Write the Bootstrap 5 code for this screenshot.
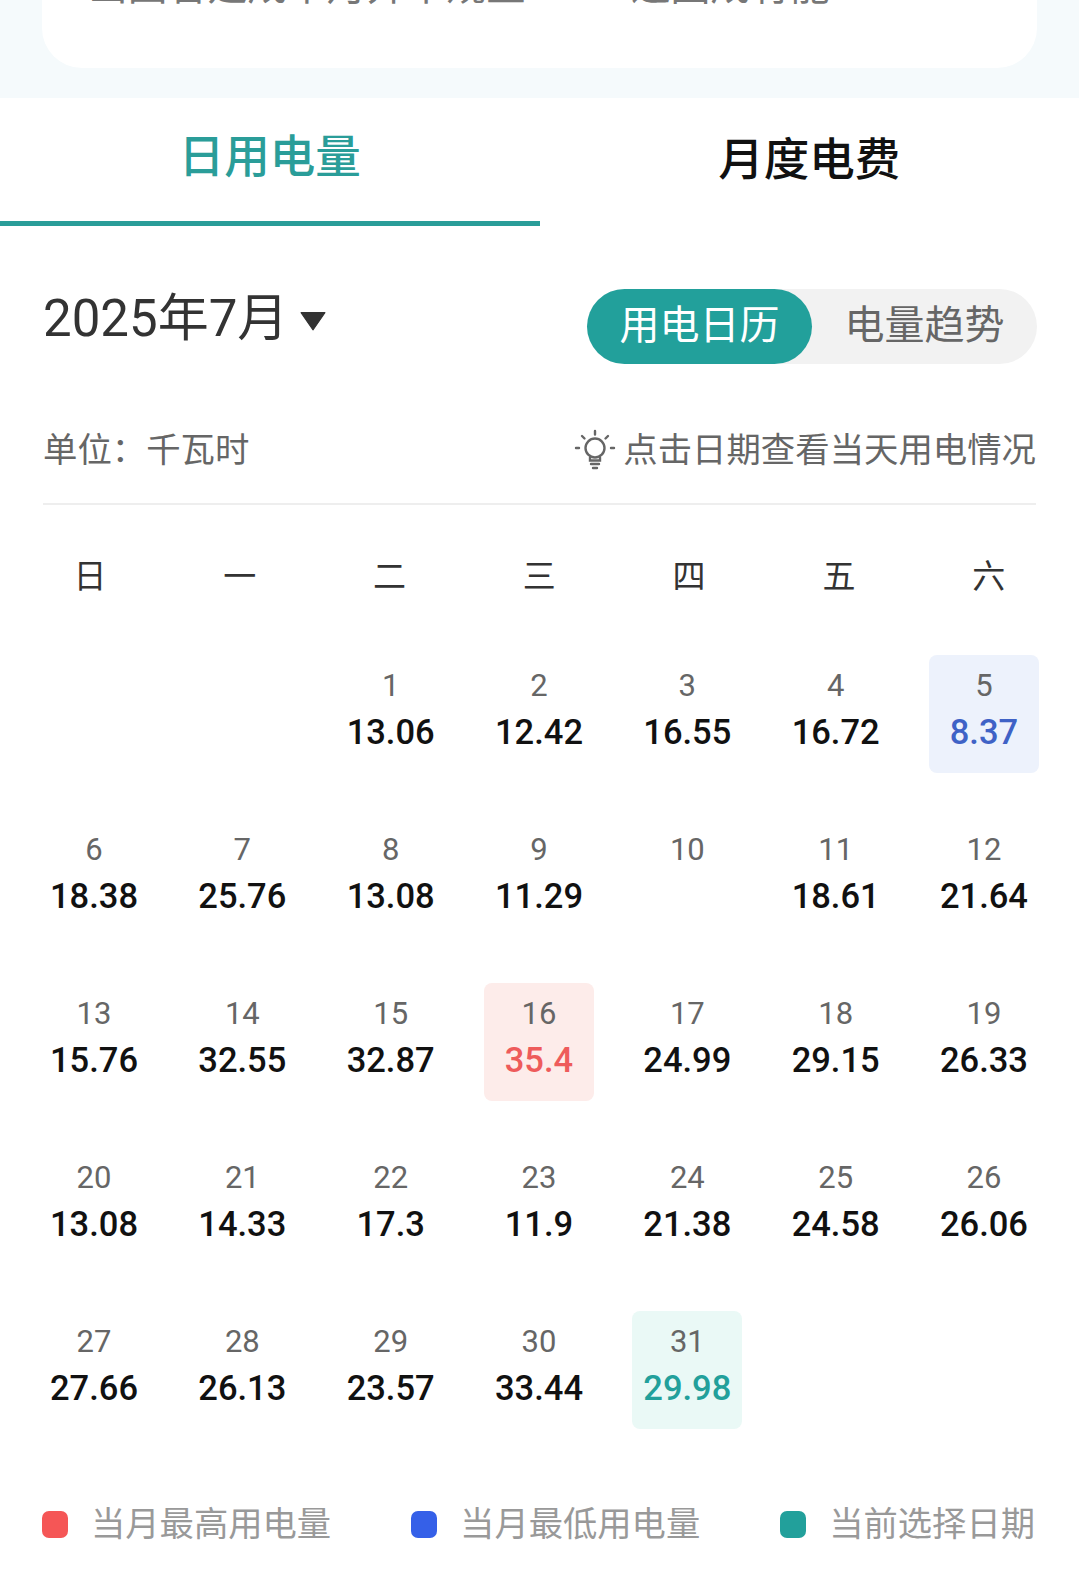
<!doctype html>
<html lang="zh"><head><meta charset="utf-8">
<link href="https://cdn.jsdelivr.net/npm/bootstrap@5.3.0/dist/css/bootstrap.min.css" rel="stylesheet">
<style>
html,body{height:1580px;overflow:hidden;background:#fff}
body{font-family:Roboto,"Noto Sans CJK SC",sans-serif;color:#333}
.topband{height:98px;background:#f5fafc;padding:0 42px}
.topcard{height:68px;background:#fff;border-radius:0 0 40px 40px;overflow:hidden;font-size:39.8px;line-height:40px;color:#777}
.topcard>div{margin-top:-33px;padding-left:46px;gap:105px}
.tabbar{height:128px}
.tabitem{width:50%;font-size:45.5px;font-weight:500;line-height:126px;text-align:center;color:#111;height:128px}
.tabon{color:#2a9d99;border-bottom:5px solid #2a9d99;line-height:120px}
.ctlrow{padding:63px 42px 0 43px;height:138px}
.monthlabel{font-size:51px;line-height:58px;color:#333;margin-top:1px}
.caret{width:26px;height:20px;margin-left:12px;margin-top:4px}
.seg{width:450px;height:75px;background:#f2f2f2;border-radius:38px;font-size:40px;color:#666}
.segon{width:225px;height:75px;border-radius:38px;background:#22a09b;color:#fff;line-height:73px;text-align:center}
.segoff{width:225px;line-height:73px;text-align:center}
.unitwrap{margin:0 43px;padding-top:63px;height:76px;box-sizing:content-box;border-bottom:2px solid #eee}
.unitline{font-size:34.4px;line-height:46px;color:#666}
.bulb{width:42px;height:42px;margin-right:7px}
.wkrow{padding:0 15px;margin-top:50px}
.wkcell{width:149.8px;text-align:center;font-size:33px;line-height:44px;color:#333}
.calgrid{display:grid;grid-template-columns:repeat(7,110px);justify-content:space-between;row-gap:46px;padding:0 40px 0 39px;margin-top:56px}
.daycell{height:118px;border-radius:8px;text-align:center;padding-top:8px}
.daynum{font-size:31px;line-height:46px;color:#666}
.dayval{font-size:34.5px;font-weight:500;line-height:46px;color:#111}
.hi{background:#fdecea}.hi .dayval{color:#ee5b5b}
.lo{background:#edf2fc}.lo .dayval{color:#3f62c6}
.cur{background:#eaf9f6}.cur .dayval{color:#22a09b}
.legend{padding:0 44px 0 42px;margin-top:72px;font-size:34.3px;line-height:46px;color:#999}
.swatch{width:26px;height:27px;border-radius:7px;margin-right:23px}
.sw-red{background:#f55656}.sw-blue{background:#3560e8}.sw-teal{background:#22a09b}
</style></head><body>
<div class="topband"><div class="topcard"><div class="d-flex"><span>出国省建成本月并本规置</span><span>退园成有能</span></div></div></div>
<div class="tabbar d-flex"><div class="tabitem tabon">日用电量</div><div class="tabitem">月度电费</div></div>
<div class="ctlrow d-flex justify-content-between align-items-start">
  <div class="d-flex align-items-center monthlabel">2025年7月<svg class="caret" viewBox="0 0 25 18" preserveAspectRatio="none"><path d="M1 1.5h23L12.5 17z" fill="#333" stroke="#333" stroke-linejoin="round"/></svg></div>
  <div class="seg d-flex"><div class="segon">用电日历</div><div class="segoff">电量趋势</div></div>
</div>
<div class="unitwrap">
  <div class="d-flex justify-content-between align-items-center unitline"><span>单位：千瓦时</span>
  <span class="d-flex align-items-center"><svg class="bulb" viewBox="0 0 42 42" fill="none" stroke="#666" stroke-width="2.4" stroke-linecap="round"><circle cx="21" cy="19" r="9.5"/><path d="M16 28.5v3h10v-3M17 35h8M19 39h4M21 2v3.5M8 7l2.5 2.5M34 7l-2.5 2.5M2 19h3M37 19h3"/></svg>点击日期查看当天用电情况</span></div>
</div>
<div class="wkrow d-flex"><div class="wkcell">日</div><div class="wkcell">一</div><div class="wkcell">二</div><div class="wkcell">三</div><div class="wkcell">四</div><div class="wkcell">五</div><div class="wkcell">六</div></div>
<div class="calgrid" id="calgrid"></div>
<div class="legend d-flex justify-content-between">
  <div class="d-flex align-items-center"><span class="swatch sw-red"></span>当月最高用电量</div>
  <div class="d-flex align-items-center"><span class="swatch sw-blue"></span>当月最低用电量</div>
  <div class="d-flex align-items-center"><span class="swatch sw-teal"></span>当前选择日期</div>
</div>
<script>
const v=[null,null,[1,'13.06'],[2,'12.42'],[3,'16.55'],[4,'16.72'],[5,'8.37','lo'],[6,'18.38'],[7,'25.76'],[8,'13.08'],[9,'11.29'],[10,''],[11,'18.61'],[12,'21.64'],[13,'15.76'],[14,'32.55'],[15,'32.87'],[16,'35.4','hi'],[17,'24.99'],[18,'29.15'],[19,'26.33'],[20,'13.08'],[21,'14.33'],[22,'17.3'],[23,'11.9'],[24,'21.38'],[25,'24.58'],[26,'26.06'],[27,'27.66'],[28,'26.13'],[29,'23.57'],[30,'33.44'],[31,'29.98','cur']];
document.getElementById('calgrid').innerHTML=v.map(c=>c?`<div class="daycell ${c[2]||''}"><div class="daynum">${c[0]}</div><div class="dayval">${c[1]}</div></div>`:'<div class="daycell"></div>').join('');
</script>
<script src="https://cdn.jsdelivr.net/npm/bootstrap@5.3.0/dist/js/bootstrap.bundle.min.js"></script>
</body></html>
